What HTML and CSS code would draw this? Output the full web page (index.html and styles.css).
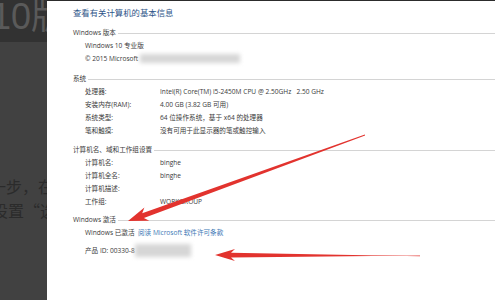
FILE: index.html
```html
<!DOCTYPE html>
<html>
<head>
    <meta name="viewport" content="width=device-width, initial-scale=1">
    <link rel="stylesheet" href="styles.css">
</head>

<body>
    <div class="screen">
        <div class="backdrop">
            <div class="bg-title">10版</div>
            <div class="bg-body">
                <p class="bg-line">一步，在设置</p>
                <p class="bg-line bg-second">设置“选项</p>
            </div>
        </div>

        <div class="panel">
            <div class="title">查看有关计算机的基本信息</div>

            <div class="section">
                <div class="heading">Windows 版本</div>
                <div class="rows">
                    <div class="row">Windows 10 专业版</div>
                    <div class="row">© 2015 Microsoft <span class="blur blur-copy"></span></div>
                </div>
            </div>

            <div class="section sys">
                <div class="heading">系统</div>
                <div class="rows">
                    <div class="row"><span class="label">处理器:</span>Intel(R) Core(TM) i5-2450M CPU @ 2.50GHz &nbsp; 2.50 GHz</div>
                    <div class="row"><span class="label">安装内存(RAM):</span>4.00 GB (3.82 GB 可用)</div>
                    <div class="row"><span class="label">系统类型:</span>64 位操作系统，基于 x64 的处理器</div>
                    <div class="row"><span class="label">笔和触摸:</span>没有可用于此显示器的笔或触控输入</div>
                </div>
            </div>

            <div class="section">
                <div class="heading">计算机名、域和工作组设置</div>
                <div class="rows">
                    <div class="row"><span class="label">计算机名:</span>binghe</div>
                    <div class="row"><span class="label">计算机全名:</span>binghe</div>
                    <div class="row"><span class="label">计算机描述:</span></div>
                    <div class="row"><span class="label">工作组:</span>WORKGROUP</div>
                </div>
            </div>

            <div class="section">
                <div class="heading">Windows 激活</div>
                <div class="rows">
                    <div class="row">Windows 已激活 &nbsp;<a class="link" href="#">阅读 Microsoft 软件许可条款</a></div>
                    <div class="row row-id">产品 ID: 00330-8<span class="blur blur-id"></span></div>
                </div>
            </div>
        </div>

        <!-- красные стрелки поверх окна -->
        <svg class="arrows" width="495" height="300" viewBox="0 0 495 300">
            <polygon fill="#e2332e" points="365.1,135.4 143.9,217.9 149.2,220.8 128,221 144.4,207.6 142.2,213.2 364.9,134.6"/>
            <polygon fill="#e2332e" points="420,255.6 231,257.6 235,261 215,255 235,249 231,252.8 420,256.2"/>
        </svg>
    </div>
</body>
</html>
```

FILE: styles.css
```css
body {
    margin: 0;
    background: #414141;
}

.screen {
    position: relative;
    display: flex;
    width: 495px;
    height: 300px;
    overflow: hidden;
}

/* Затемнённая страница слева */
.backdrop {
    width: 47px;
    flex-shrink: 0;
    overflow: hidden;
    display: flex;
    flex-direction: column;
}

.bg-title {
    height: 42px;
    background: #323232;
    color: #5a5a5a;
    font-family: "Liberation Sans", "Noto Sans CJK SC", sans-serif;
    font-size: 36px;
    line-height: 34px;
    white-space: nowrap;
    text-indent: -9px;
}

.bg-body {
    flex: 1;
    background: #414141;
    padding-top: 132px;
}

.bg-line {
    margin: 0;
    white-space: nowrap;
    font-family: "Noto Sans CJK SC", sans-serif;
    font-size: 16px;
    line-height: 24px;
    color: #2b2b2b;
    text-indent: -10px;
}

.bg-second {
    text-indent: -8px;
}

/* Окно со сведениями о системе */
.panel {
    flex: 1;
    background: #fff;
    border-top: 1px solid #2c2c2c;
    padding: 3px 0 0 26px;
    font-family: "Open Sans", "Noto Sans CJK SC", sans-serif;
    font-size: 6.6px;
    color: #3a3a3a;
}

.title {
    font-size: 8.4px;
    line-height: 16px;
    color: #2e5588;
    font-family: "Noto Sans CJK SC", sans-serif;
}

.section {
    margin-top: 5.5px;
}

.section:first-of-type {
    margin-top: 3.5px;
}

.sys {
    margin-top: 7.5px;
}

.heading {
    display: flex;
    align-items: center;
    height: 13px;
    line-height: 13px;
    white-space: nowrap;
}

.heading::after {
    content: "";
    flex: 1;
    height: 1px;
    margin: 2px 0 0 2px;
    background: #d4d4d4;
}

.rows {
    padding-left: 12px;
}

.row {
    display: flex;
    align-items: center;
    height: 13px;
    line-height: 13px;
    white-space: pre;
}

.row-id {
    margin-top: 5px;
}

.label {
    width: 75px;
    flex-shrink: 0;
}

.link {
    color: #3d78b5;
    text-decoration: none;
}

.blur {
    display: inline-block;
    background: #d6d6d6;
    filter: blur(2px);
}

.blur-copy {
    width: 100px;
    height: 9px;
}

.blur-id {
    width: 56px;
    height: 13px;
}

.arrows {
    position: absolute;
    top: 0;
    left: 0;
    pointer-events: none;
}
```
